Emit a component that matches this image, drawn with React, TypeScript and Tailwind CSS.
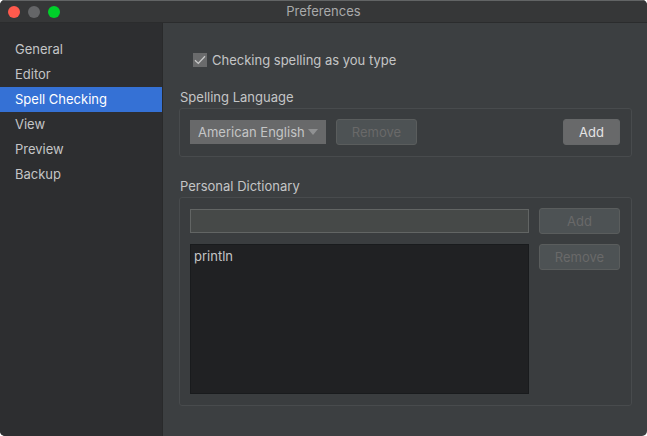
import { useState } from "react";
import type { ReactNode } from "react";
import { clsx } from "clsx";

const sections = ["General", "Editor", "Spell Checking", "View", "Preview", "Backup"];

type ButtonProps = {
  children: ReactNode;
  disabled?: boolean;
  className?: string;
};

function PushButton({ children, disabled, className }: ButtonProps) {
  return (
    <button
      type="button"
      disabled={disabled}
      className={clsx(
        "h-[26px] shrink-0 rounded-[3px] border text-center",
        disabled
          ? "border-[#5a5d5d] bg-[#4d5254] text-[#696969]"
          : "border-[#666869] bg-[#68696a] text-[#e4e4e4]",
        className,
      )}
    >
      {children}
    </button>
  );
}

function Group({ title, children }: { title: string; children: ReactNode }) {
  return (
    <section className="flex flex-col gap-[3px]">
      <h2 className="px-px">{title}</h2>
      <div className="flex flex-col gap-2.5 rounded-[3px] border border-[#484b4d] bg-[#3a3d3f] pt-2.5 pr-[11px] pb-[11px] pl-2.5">
        {children}
      </div>
    </section>
  );
}

function TitleBar() {
  return (
    <header className="grid h-[23px] grid-cols-[1fr_auto_1fr] items-center border-t border-b border-t-[#626465] border-b-[#2b2c2d] bg-[#363738] px-2">
      <div className="flex gap-2">
        <button type="button" aria-label="Close" className="size-3 rounded-full bg-[#ff5a4d]" />
        <button type="button" aria-label="Minimize" className="size-3 rounded-full bg-[#656668]" />
        <button type="button" aria-label="Zoom" className="size-3 rounded-full bg-[#00d02a]" />
      </div>
      <h1 className="pb-0.5 text-[#a9aaab]">Preferences</h1>
    </header>
  );
}

export default function App() {
  const [active, setActive] = useState("Spell Checking");
  const [checking, setChecking] = useState(true);
  const [word, setWord] = useState("");

  return (
    <div className="min-h-screen bg-white font-['Inter',sans-serif] text-[13px] leading-4 text-[#c4c5c6]">
      <div className="flex min-h-screen flex-col overflow-hidden rounded-[5px] bg-[#3c3f41]">
        <TitleBar />
        <div className="flex grow">
          <nav className="flex w-[163px] shrink-0 flex-col border-r border-[#292a2b] bg-[#2d2e30] pt-3.5">
            {sections.map((name) => (
              <button
                key={name}
                type="button"
                onClick={() => setActive(name)}
                className={clsx(
                  "h-[25px] px-[15px] pb-0.5 text-left",
                  name === active && "bg-[#3571d5] text-white",
                )}
              >
                {name}
              </button>
            ))}
          </nav>

          <main className="flex min-w-0 grow flex-col gap-[21px] pt-[29px] pr-[15px] pb-[30px] pl-4">
            <label className="flex items-center gap-[5px] self-start pl-3.5">
              <span className="grid size-3.5">
                <input
                  type="checkbox"
                  checked={checking}
                  onChange={(event) => setChecking(event.target.checked)}
                  className="peer col-start-1 row-start-1 size-3.5 appearance-none bg-[#6a6b6c]"
                />
                <svg
                  viewBox="0 0 14 14"
                  className="pointer-events-none col-start-1 row-start-1 hidden size-3.5 peer-checked:block"
                  fill="none"
                  stroke="#c8c9c9"
                  strokeWidth="1.3"
                >
                  <path d="M2 7.2 L5.3 10.4 L12 3.2" />
                </svg>
              </span>
              Checking spelling as you type
            </label>

            <Group title="Spelling Language">
              <div className="flex items-center gap-2.5">
                <div className="relative">
                  <select
                    aria-label="Spelling language"
                    className="h-6 w-[136px] appearance-none bg-[#68696a] pl-2 text-[#c4c5c6]"
                  >
                    <option>American English</option>
                  </select>
                  <svg viewBox="0 0 10 6" className="pointer-events-none absolute top-[9px] right-2 h-1.5 w-2.5">
                    <path d="M0 0 H10 L5 6 Z" fill="#909192" />
                  </svg>
                </div>
                <PushButton disabled className="w-[81px]">
                  Remove
                </PushButton>
                <PushButton className="ml-auto w-[57px]">Add</PushButton>
              </div>
            </Group>

            <Group title="Personal Dictionary">
              <div className="flex items-center gap-2.5">
                <input
                  type="text"
                  aria-label="New word"
                  value={word}
                  onChange={(event) => setWord(event.target.value)}
                  className="h-6 min-w-0 grow border border-[#626564] bg-[#464948] px-1 outline-none"
                />
                <PushButton disabled className="w-[81px]">
                  Add
                </PushButton>
              </div>
              <div className="flex items-start gap-2.5">
                <ul className="h-[150px] grow border border-[#191b1d] bg-[#202123] p-[3px]">
                  <li>println</li>
                </ul>
                <PushButton disabled className="w-[81px]">
                  Remove
                </PushButton>
              </div>
            </Group>
          </main>
        </div>
      </div>
    </div>
  );
}
